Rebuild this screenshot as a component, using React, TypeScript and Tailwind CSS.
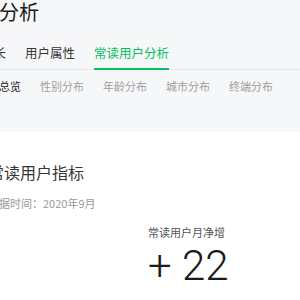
import React from 'react';

const mainTabs = [
  { label: '用户增长', active: false },
  { label: '用户属性', active: false },
  { label: '常读用户分析', active: true },
];

const subTabs = ['总览', '性别分布', '年龄分布', '城市分布', '终端分布'];

const App: React.FC = () => {
  return (
    <div
      className="w-[300px] h-[300px] overflow-hidden bg-[#f6f7f9]"
      style={{ fontFamily: '"Noto Sans CJK SC", "Noto Sans", sans-serif' }}
    >
      <div className="-ml-[45px] w-[400px]">
        {/* Page title */}
        <div className="pl-[4px] h-[24px] text-[20px] leading-[24px] text-[#1a1a1a]">用户分析</div>

        {/* Main tabs */}
        <div className="mt-[14px] pl-[1px] flex gap-[19px] border-b border-[#e6e7ea]">
          {mainTabs.map((t) => (
            <div
              key={t.label}
              className={`-mb-px pt-[6px] pb-[6px] text-[12.5px] leading-[18px] border-b-2 ${
                t.active ? 'border-[#07c160] text-[#07c160]' : 'border-transparent text-[#353535]'
              }`}
            >
              {t.label}
            </div>
          ))}
        </div>

        {/* Sub tabs */}
        <div className="mt-[7px] pl-[44px] flex gap-[19px] text-[11px] leading-[18px]">
          {subTabs.map((s, i) => (
            <span key={s} className={i === 0 ? 'text-[#1a1a1a]' : 'text-[#a0a0a0]'}>
              {s}
            </span>
          ))}
        </div>

        {/* Card */}
        <div className="mt-[37px] bg-white h-[200px] pl-[33px] pt-[28px]">
          <div className="text-[16px] leading-[24px] text-[#353535]">常读用户指标</div>
          <div className="mt-[11px] text-[11px] leading-[16px] text-[#999999]">数据时间：2020年9月</div>
          <div className="ml-[160px] mt-[13px]">
            <div className="text-[11px] leading-[16px] text-[#555555]">常读用户月净增</div>
            <div
              className="mt-[2px] text-[42px] leading-[48px] font-light text-[#1a1a1a]"
              style={{ fontFamily: 'Roboto, "Noto Sans", sans-serif' }}
            >
              + 22
            </div>
          </div>
        </div>
      </div>
    </div>
  );
};

export default App;
